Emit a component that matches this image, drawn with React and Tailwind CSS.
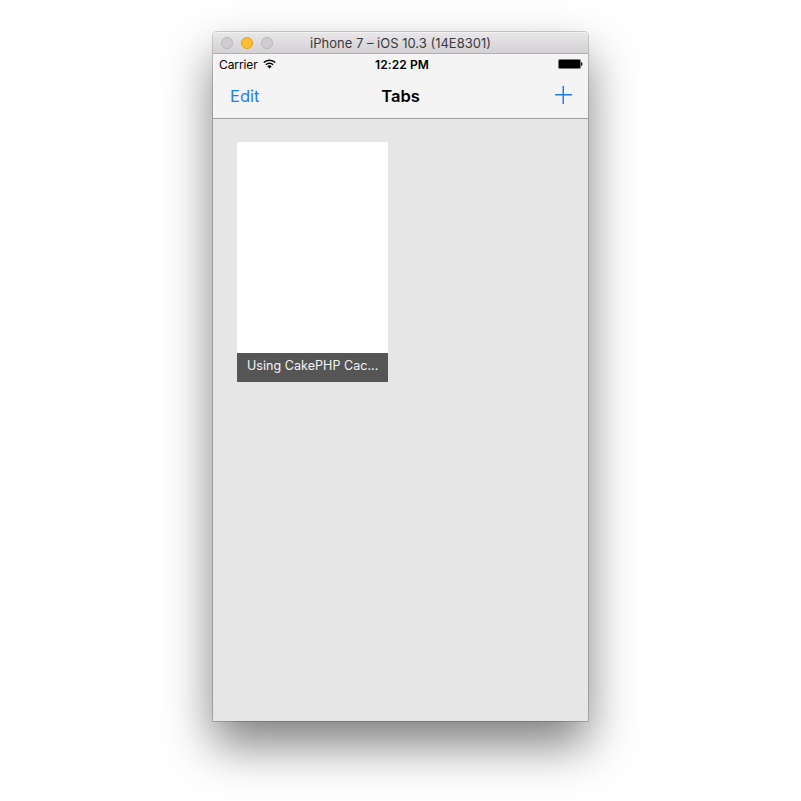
function TrafficLight({ className }) {
  return <span className={`h-3 w-3 rounded-full border ${className}`} />;
}

function TitleBar() {
  return (
    <div className="grid h-[22px] grid-cols-[1fr_auto_1fr] items-center rounded-t-[4px] border-b border-[#b1afb1] bg-linear-to-b from-[#e9e7e9] to-[#d3d1d3] shadow-[inset_0_1px_0_#f4f3f4]">
      <div className="flex gap-2 pl-2">
        <TrafficLight className="border-[#b9b7b9] bg-[#d0ced0]" />
        <TrafficLight className="border-[#dfa023] bg-[#fdbe2f]" />
        <TrafficLight className="border-[#b9b7b9] bg-[#d0ced0]" />
      </div>
      <span className="whitespace-nowrap pt-px text-[13px] leading-5 text-[#3c3a3c]">
        iPhone 7 – iOS 10.3 (14E8301)
      </span>
      <span />
    </div>
  );
}

function StatusBar() {
  return (
    <div className="grid h-5 grid-cols-[1fr_auto_1fr] items-center pl-1.5 pr-[5px] text-[12px] leading-[18px] text-black">
      <div className="flex items-center gap-[5px]">
        <span className="pt-0.5 tracking-[-0.1px]">Carrier</span>
        <svg width="13" height="10" viewBox="0 0 13 10" fill="none" stroke="#000" strokeWidth="1.6">
          <path d="M.8 3.5a8.2 8.2 0 0 1 11.4 0" />
          <path d="M2.9 5.8a5.1 5.1 0 0 1 7.2 0" />
          <path d="M6.5 9.6 4.4 7.4a3 3 0 0 1 4.2 0z" fill="#000" stroke="none" />
        </svg>
      </div>
      <span className="pl-0.5 pt-0.5 font-semibold tracking-[0.1px]">12:22 PM</span>
      <svg className="justify-self-end" width="25" height="10" viewBox="0 0 25 10">
        <rect width="23" height="10" rx="1.8" fill="#777" />
        <rect x="1" y="1" width="21" height="8" rx=".8" fill="#000" />
        <path d="M23 3c2 .6 2 3.6 0 4.2z" fill="#222" />
      </svg>
    </div>
  );
}

function NavBar() {
  return (
    <div className="grid h-[45px] grid-cols-[1fr_auto_1fr] items-center border-b border-[#a0a0a0] pl-4 pr-4 text-[16.5px]">
      <span className="pl-px pt-px text-[#1f7bff]">Edit</span>
      <span className="pt-px font-semibold text-black">Tabs</span>
      <svg className="mb-[3px] justify-self-end" width="17" height="18" viewBox="0 0 17 18" fill="none" stroke="#1f7bff" strokeWidth="1.5">
        <path d="M8.25 0v18M0 8.75h17" />
      </svg>
    </div>
  );
}

export default function App() {
  return (
    <div className="flex h-[801px] w-[801px] items-start overflow-hidden bg-white pl-[213px] pt-8 font-[Inter,sans-serif]">
      <div className="flex h-[689px] w-[375px] flex-col rounded-t-[4px] bg-[#e6e6e6] shadow-[0_0_0_1px_rgba(0,0,0,0.18),0_24px_48px_rgba(0,0,0,0.5)]">
        <TitleBar />
        <header className="bg-[#f4f4f4]">
          <StatusBar />
          <NavBar />
        </header>
        <main className="flex-1 pl-6 pt-[23px]">
          <article className="flex h-60 w-[151px] flex-col justify-end bg-white">
            <div className="h-[29px] bg-[#555] pl-2.5 pt-[3px] text-[12.5px] leading-5 tracking-[0.05px] text-[#f4f4f4]">
              <span className="whitespace-nowrap">Using CakePHP Cac...</span>
            </div>
          </article>
        </main>
      </div>
    </div>
  );
}
